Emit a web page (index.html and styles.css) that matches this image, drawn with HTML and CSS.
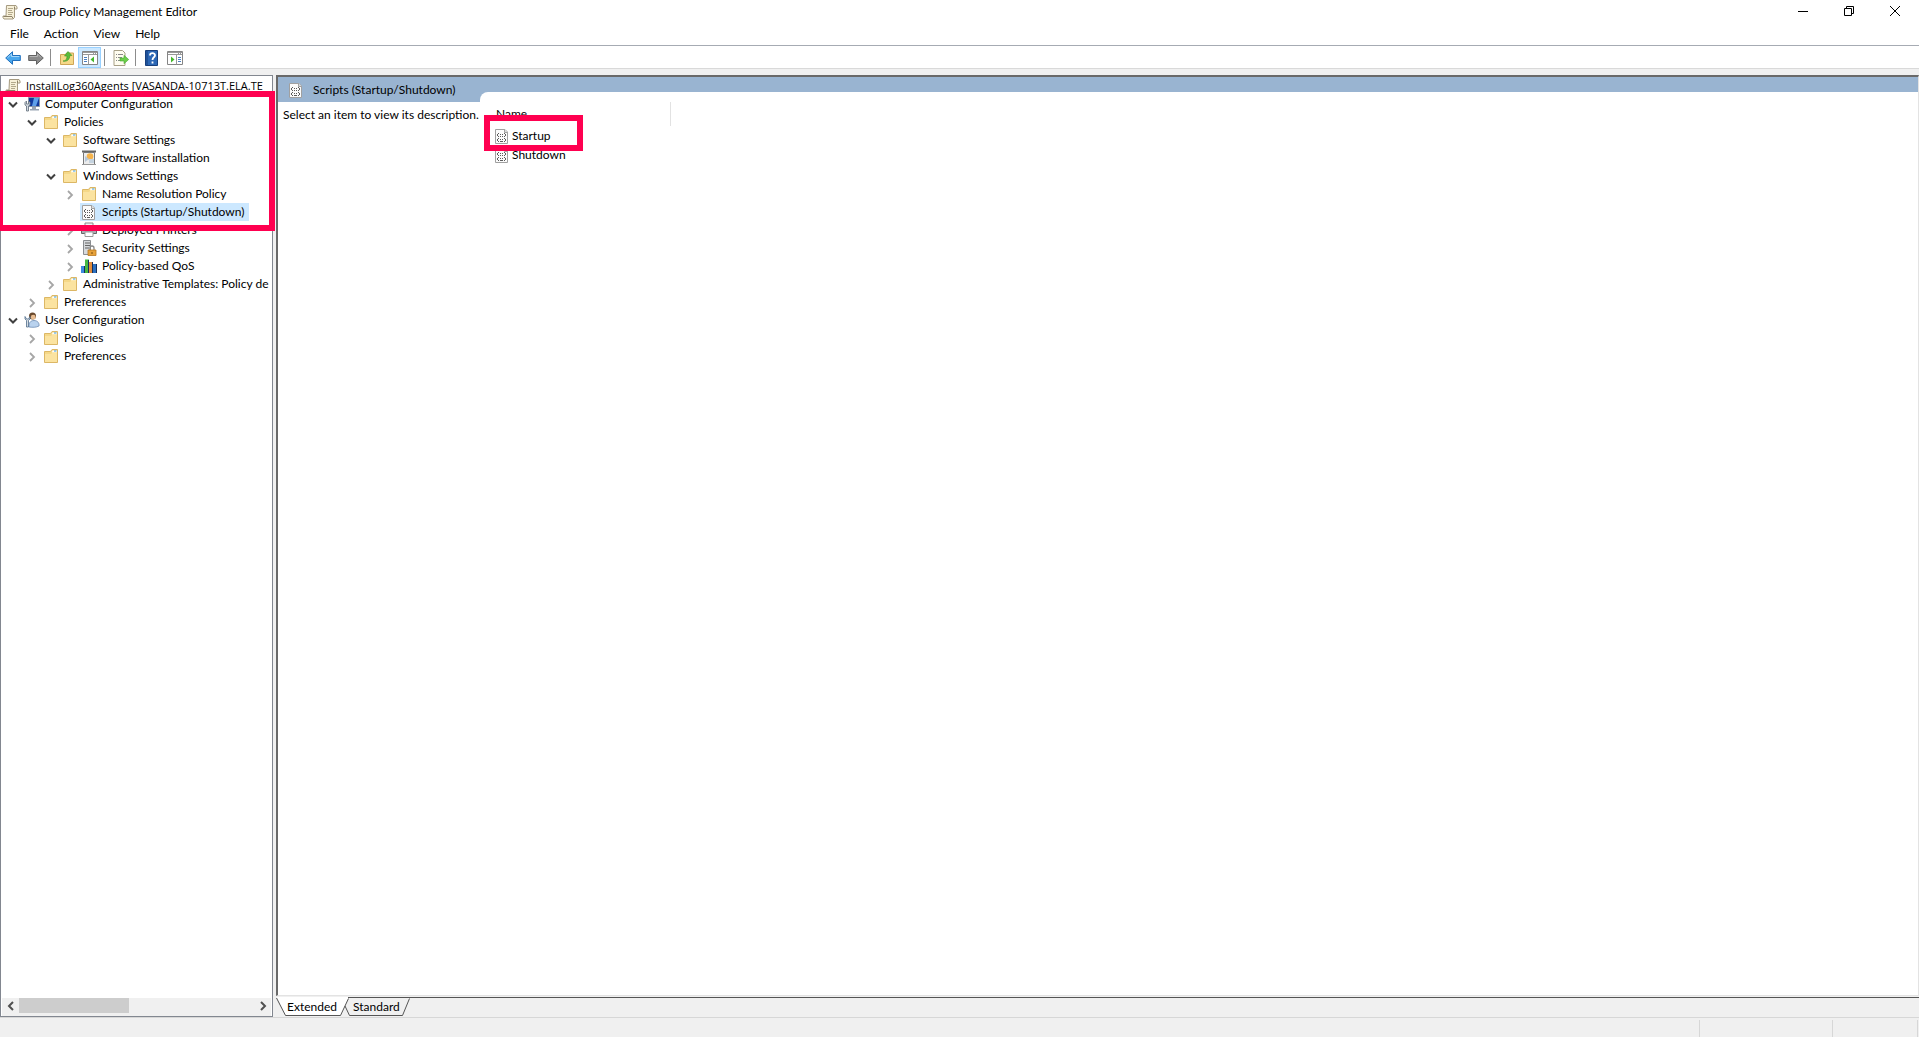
FILE: index.html
```html
<!DOCTYPE html>
<html lang="en">
<head>
<meta charset="utf-8">
<title>Group Policy Management Editor</title>
<link rel="stylesheet" href="styles.css">
</head>
<body>
<svg class="sprite" aria-hidden="true">
  <symbol id="folder" viewBox="0 0 16 16">
    <path d="M1.500 3.500h6l1.500-2h5.500v13h-13z" fill="#f5d888" stroke="#dcb765"/>
    <path d="M9.500 2.500h4.500v2H9z" fill="#fff"/><path d="M11 2.500h2.500v1H11z" fill="#3d9be0"/>
    <path d="M2 6h6l1.500-1.500H14V14H2z" fill="#fbe3a0"/>
  </symbol>
  <symbol id="scroll" viewBox="0 0 16 16">
    <path d="M4.500 1.500h9.500l1 1.500v2h-2.500v8.500l-1.500 1.500H2l-1-1.500V12h3z" fill="#f7f0d8" stroke="#a59a80"/>
    <path d="M12.500 5V2.500M1.500 12.500H10l1 2" fill="none" stroke="#8d8268"/>
    <path d="M6 4.500h5M6 6.500h4M6 8.500h5M6 10.500h4" stroke="#b3a98b"/>
  </symbol>
  <symbol id="script" viewBox="0 0 16 16">
    <path d="M1.500 1.500h9.500l2.500 2.500v11.500h-12z" fill="#fbfbfb" stroke="#a0a0a0"/>
    <path d="M10.500 1.500V4.500h3" fill="#ddd" stroke="#a0a0a0"/>
    <path d="M4 5h1v1H4zM3 6h1v2H3zM4 8h1v1H4zM6 6h1v1H6zM8 6h1v1H8zM10 5h1v1h-1zM11 6h1v2h-1zM10 8h1v1h-1zM6 8h1v1H6zM8 8h1v1H8zM4 10h1v1H4zM3 11h1v2H3zM4 13h1v1H4zM6 11h1v1H6zM8 11h1v1H8zM10 10h1v1h-1zM11 11h1v2h-1zM10 13h1v1h-1zM6 13h3v1H6z" fill="#5c5c5c"/>
  </symbol>
  <symbol id="computer" viewBox="0 0 16 16">
    <path d="M4.500 1.500h11v9h-11z" fill="#12399c" stroke="#8996a8"/>
    <path d="M10 2h5L12 10H8z" fill="#5fa0ea"/><path d="M8 11h4v2H8zM6 13h9v1.500H6z" fill="#9aa5b3"/>
    <path d="M1 6.500l1.500-1.500v3h2V5L6 6.500V9L4.500 10v5h-2v-5L1 9z" fill="#d4dbe2" stroke="#6c7884" stroke-width=".9"/>
  </symbol>
  <symbol id="installer" viewBox="0 0 16 16">
    <path d="M1 1.500h14" stroke="#666" stroke-width="2"/><path d="M2.500 2.500h11v12h-11z" fill="#ececec" stroke="#777"/>
    <circle cx="9" cy="6.500" r="3.300" fill="#f6b44c"/><path d="M4 6l4 3-4 3z" fill="#b6c6d6"/><path d="M8 9h5v4H8z" fill="#c5d3df"/><path d="M1 14.500h14" stroke="#999"/>
  </symbol>
  <symbol id="printer" viewBox="0 0 16 16">
    <path d="M4 1h8v5H4z" fill="#eef3f8" stroke="#888"/><path d="M.5 5.500h15v6H.5z" fill="#a9aeb4" stroke="#666"/>
    <path d="M1 8.500h14" stroke="#333"/><path d="M4 10h8v4.500H4z" fill="#fff" stroke="#999"/><path d="M12 7h2v1h-2z" fill="#62c14b"/>
  </symbol>
  <symbol id="security" viewBox="0 0 16 16">
    <path d="M2.500.500h7v14h-7z" fill="#d6d9dc" stroke="#8a8d91"/><path d="M4 3h5M4 5.500h5M4 8h4" stroke="#666"/>
    <path d="M9 10V8a2 2 0 014 0v2" fill="none" stroke="#888" stroke-width="1.300"/><path d="M7 10h8v5.500H7z" fill="#e7a23a" stroke="#b87720" stroke-width=".8"/><path d="M11 12v2" stroke="#7b4c10"/>
  </symbol>
  <symbol id="qos" viewBox="0 0 16 16">
    <path d="M0 8h4v7H0z" fill="#3f8ae0"/><path d="M4 1.500h4V15H4z" fill="#45b843"/><path d="M8 4h4v11H8z" fill="#e18c3b"/><path d="M12 6h4v9h-4z" fill="#2b70bf"/>
    <path d="M3.500 8v7M7.500 2v13M11.500 4v11M15.500 6v9" stroke="#14305e"/>
  </symbol>
  <symbol id="user" viewBox="0 0 16 16">
    <circle cx="8.500" cy="4" r="3.500" fill="#6b4a2d"/><circle cx="9.200" cy="5.200" r="2.400" fill="#e9bd91"/>
    <path d="M5 15c-.5-4 1.500-6.500 5-6.500s5.500 2.500 5 5.500c-3 1.500-6 1.500-10 1z" fill="#b9d2ee" stroke="#6d8cb3" stroke-width=".8"/>
    <path d="M1 4.500v2.500l1.500 1.500V15h2V8.500L6 7V4.500L4.500 7h-2z" fill="#d4dbe2" stroke="#4f6c8c" stroke-width=".8"/>
  </symbol>
  <symbol id="open" viewBox="0 0 16 16"><path d="M4 6.500l4 4 4-4" fill="none" stroke="#404040" stroke-width="2"/></symbol>
  <symbol id="closed" viewBox="0 0 16 16"><path d="M6 5l4 4-4 4" fill="none" stroke="#a6a6a6" stroke-width="1.800"/></symbol>
</svg>

<div class="app">
  <header class="titlebar">
    <svg class="icon"><use href="#scroll"/></svg>
    <h1 class="title">Group Policy Management Editor</h1>
    <div class="window-controls">
      <button class="window-button" aria-label="Minimize"><svg class="glyph" viewBox="0 0 12 12"><path d="M1 6.500h10" stroke="#000"/></svg></button>
      <button class="window-button" aria-label="Restore"><svg class="glyph" viewBox="0 0 12 12"><path d="M1.500 3.500h7v7h-7zM3.500 3.500v-2h7v7h-2" fill="none" stroke="#000"/></svg></button>
      <button class="window-button" aria-label="Close"><svg class="glyph" viewBox="0 0 12 12"><path d="M1 1l10 10M11 1L1 11" stroke="#000"/></svg></button>
    </div>
  </header>

  <nav class="menubar">
    <button class="menu">File</button>
    <button class="menu">Action</button>
    <button class="menu">View</button>
    <button class="menu">Help</button>
  </nav>

  <div class="toolbar" role="toolbar">
    <button class="tool" aria-label="Back"><svg class="icon" viewBox="0 0 16 16"><path d="M.7 8L7.500 1.700V5.500h7.800v5H7.500v3.800z" fill="#4aa7ec" stroke="#1f6fbd"/><path d="M2.500 7.700L6.500 4v2.500h7.800" fill="none" stroke="#a5d8fa"/></svg></button>
    <button class="tool" aria-label="Forward"><svg class="icon" viewBox="0 0 16 16"><path d="M15.300 8L8.500 1.700V5.500H.7v5h7.800v3.800z" fill="#8b8b8b" stroke="#616161"/><path d="M1.700 6.500h7.800V4l3.500 3.500" fill="none" stroke="#b5b5b5"/></svg></button>
    <span class="divider"></span>
    <button class="tool" aria-label="Up one level"><svg class="icon" viewBox="0 0 16 16"><path d="M1.500 4.500h5l1-1.500h7v11.500h-13z" fill="#f5d888" stroke="#cfa556"/><path d="M4 11c3 0 4-2 4-5H5.500L9 1.500 13 5.500h-2.200c0 4-2.800 6.500-6.800 5.500z" fill="#58bd3a" stroke="#3a9427" stroke-width=".6"/></svg></button>
    <button class="tool tool-on" aria-label="Show or hide console tree" aria-pressed="true"><svg class="icon" viewBox="0 0 16 16"><path d="M.5 1.500h15v13H.5z" fill="#fff" stroke="#858585"/><path d="M1 2h14v3H1z" fill="#999"/><path d="M1 3.500h10M12 3.500h1M14 3.500h1" stroke="#fff"/><path d="M6.500 5v9.500" stroke="#999"/><path d="M2 7.500h3M2 9.500h3M2 11.500h3" stroke="#4b7fc0"/><path d="M12 6.500v6L8.500 9.500z" fill="#45b82c"/></svg></button>
    <span class="divider"></span>
    <button class="tool" aria-label="Export list"><svg class="icon" viewBox="0 0 16 16"><path d="M1 .500h8.500L12 3v12.500H1z" fill="#fffdf0" stroke="#a79f86"/><path d="M3 4.500h1M5 4.500h5M3 7.500h1M5 7.500h4M3 10.500h1M5 10.500h4" stroke="#8a8a8a"/><path d="M7 8h4V5.300l4.700 4.200-4.700 4.200V11H7z" fill="#6cce4b" stroke="#48a930" stroke-width=".6"/></svg></button>
    <span class="divider"></span>
    <button class="tool" aria-label="Help"><svg class="icon" viewBox="0 0 16 16"><path d="M1.500.500h12v15h-12z" fill="#2c67b5" stroke="#173f7c"/><path d="M3 1v14" stroke="#123c7d"/><path d="M6 5.500c0-3 5-3 5-.2C11 7.500 8.500 7 8.500 10M8.500 11.500v2" fill="none" stroke="#fff" stroke-width="1.800"/></svg></button>
    <button class="tool" aria-label="Show or hide action pane"><svg class="icon" viewBox="0 0 16 16"><path d="M.5 1.500h15v13H.5z" fill="#fff" stroke="#858585"/><path d="M1 2h14v3H1z" fill="#999"/><path d="M1 3.500h10M12 3.500h1M14 3.500h1" stroke="#fff"/><path d="M9.500 5v9.500" stroke="#999"/><path d="M11 7.500h3M11 9.500h3M11 11.500h3" stroke="#4b7fc0"/><path d="M4 6.500v6L7.500 9.500z" fill="#45b82c"/></svg></button>
  </div>

  <main class="workspace">
    <aside class="tree-pane">
      <ul class="tree">
        <li class="node root"><svg class="icon"><use href="#scroll"/></svg><span class="label">InstallLog360Agents [VASANDA-10713T.ELA.TE</span></li>
        <li class="node"><svg class="icon"><use href="#open"/></svg><svg class="icon"><use href="#computer"/></svg><span class="label">Computer Configuration</span></li>
        <li class="node level-1"><svg class="icon"><use href="#open"/></svg><svg class="icon"><use href="#folder"/></svg><span class="label">Policies</span></li>
        <li class="node level-2"><svg class="icon"><use href="#open"/></svg><svg class="icon"><use href="#folder"/></svg><span class="label">Software Settings</span></li>
        <li class="node level-3"><svg class="icon"></svg><svg class="icon"><use href="#installer"/></svg><span class="label">Software installation</span></li>
        <li class="node level-2"><svg class="icon"><use href="#open"/></svg><svg class="icon"><use href="#folder"/></svg><span class="label">Windows Settings</span></li>
        <li class="node level-3"><svg class="icon"><use href="#closed"/></svg><svg class="icon"><use href="#folder"/></svg><span class="label">Name Resolution Policy</span></li>
        <li class="node level-3"><svg class="icon"></svg><span class="selected"><svg class="icon"><use href="#script"/></svg><span class="label">Scripts (Startup/Shutdown)</span></span></li>
        <li class="node level-3"><svg class="icon"><use href="#closed"/></svg><svg class="icon"><use href="#printer"/></svg><span class="label">Deployed Printers</span></li>
        <li class="node level-3"><svg class="icon"><use href="#closed"/></svg><svg class="icon"><use href="#security"/></svg><span class="label">Security Settings</span></li>
        <li class="node level-3"><svg class="icon"><use href="#closed"/></svg><svg class="icon"><use href="#qos"/></svg><span class="label">Policy-based QoS</span></li>
        <li class="node level-2"><svg class="icon"><use href="#closed"/></svg><svg class="icon"><use href="#folder"/></svg><span class="label">Administrative Templates: Policy de</span></li>
        <li class="node level-1"><svg class="icon"><use href="#closed"/></svg><svg class="icon"><use href="#folder"/></svg><span class="label">Preferences</span></li>
        <li class="node"><svg class="icon"><use href="#open"/></svg><svg class="icon"><use href="#user"/></svg><span class="label">User Configuration</span></li>
        <li class="node level-1"><svg class="icon"><use href="#closed"/></svg><svg class="icon"><use href="#folder"/></svg><span class="label">Policies</span></li>
        <li class="node level-1"><svg class="icon"><use href="#closed"/></svg><svg class="icon"><use href="#folder"/></svg><span class="label">Preferences</span></li>
      </ul>
      <div class="scrollbar">
        <button class="scroll-button" aria-label="Scroll left"><svg class="glyph" viewBox="0 0 12 12"><path d="M8 2L4 6l4 4" fill="none" stroke="#505050" stroke-width="2"/></svg></button>
        <div class="track"><div class="thumb"></div></div>
        <button class="scroll-button" aria-label="Scroll right"><svg class="glyph" viewBox="0 0 12 12"><path d="M4 2l4 4-4 4" fill="none" stroke="#505050" stroke-width="2"/></svg></button>
      </div>
      <div class="marker marker-tree"></div>
    </aside>

    <section class="result-pane">
      <div class="result-body">
        <div class="detail">
          <h2 class="detail-title"><svg class="icon"><use href="#script"/></svg>Scripts (Startup/Shutdown)</h2>
          <p class="description">Select an item to view its description.</p>
        </div>
        <div class="list">
          <table class="items">
            <thead><tr><th>Name</th></tr></thead>
            <tbody>
              <tr><td><div class="item"><svg class="icon"><use href="#script"/></svg>Startup</div></td></tr>
              <tr><td><div class="item"><svg class="icon"><use href="#script"/></svg>Shutdown</div></td></tr>
            </tbody>
          </table>
          <div class="marker marker-item"></div>
        </div>
      </div>
      <div class="tabs">
        <svg class="tab-shape" viewBox="0 0 140 20">
          <path d="M1 0l9 18.500h54.500L72.500 0z" fill="#fff"/>
          <path d="M.5 1l9 17.500h55L72.500 1.500M69 9l4.500 9.500h53l7-17" fill="none" stroke="#555"/>
        </svg>
        <button class="tab">Extended</button>
        <button class="tab">Standard</button>
        <span class="tab-rule"></span>
      </div>
    </section>
  </main>

  <footer class="statusbar">
    <span class="status-main"></span><span class="status-cell"></span><span class="status-cell status-last"></span>
  </footer>
</div>
</body>
</html>
```
FILE: styles.css
```css
* { box-sizing: border-box; }

body {
  margin: 0;
  background: #fff;
  color: #000;
  font: 12px/18px Lato, "Open Sans", sans-serif;
}

button {
  margin: 0;
  padding: 0;
  border: 0;
  background: none;
  color: inherit;
  font: inherit;
}

h1, h2, p, ul { margin: 0; padding: 0; font: inherit; }

.sprite { position: absolute; width: 0; height: 0; }
.icon { width: 16px; height: 16px; flex: none; display: block; }
.glyph { width: 12px; height: 12px; display: block; }

.app { display: flex; flex-direction: column; height: 100vh; }

/* Title bar, menus and tools */
.titlebar { display: flex; align-items: center; height: 24px; padding-left: 2px; }
.title { margin-left: 5px; }
.window-controls { display: flex; align-self: flex-start; margin-left: auto; padding-right: 1px; }
.window-button { width: 46px; height: 21px; display: grid; place-items: center; }

.menubar { display: flex; gap: 15px; height: 22px; padding: 1px 10px 2px; border-bottom: 1px solid #a6abb3; }
.toolbar { display: flex; align-items: center; height: 23px; padding: 1px 1px 0; border-bottom: 1px solid #d9d9d9; }
.tool { width: 23px; height: 21px; display: grid; place-items: center; }
.tool-on { background: #cce8ff; border: 1px solid #99d1ff; }
.divider { width: 1px; height: 17px; margin: 0 4px 0 3px; background: #8c8c8c; }

/* Console tree */
.workspace { flex: 1; min-height: 0; display: flex; gap: 3px; padding-top: 6px; background: #f0f0f0; }
.tree-pane { position: relative; width: 273px; flex: none; display: flex; flex-direction: column; border: 1px solid #828790; background: #fff; }
.tree { flex: 1; min-height: 0; overflow: hidden; padding-top: 1px; list-style: none; }
.node { display: flex; align-items: center; gap: 3px; height: 18px; padding-left: 4px; white-space: nowrap; }
.root { font: 11px/18px "Open Sans", sans-serif; }
.level-1 { padding-left: 23px; }
.level-2 { padding-left: 42px; }
.level-3 { padding-left: 61px; }
.label { margin-left: 2px; }
.selected { display: flex; align-items: center; gap: 3px; height: 18px; margin-left: -1px; padding: 0 5px 0 1px; background: #cce8ff; }

.scrollbar { display: flex; height: 18px; margin: 0 1px; padding-bottom: 3px; background: #f0f0f0; }
.scroll-button { width: 17px; display: grid; place-items: center; }
.track { flex: 1; }
.thumb { width: 47%; height: 15px; background: #cdcdcd; }

/* Result pane */
.result-pane { flex: 1; min-width: 0; display: flex; flex-direction: column; }
.result-body {
  flex: 1;
  display: flex;
  border: solid;
  border-width: 2px 1px 1px 2px;
  border-color: #696969 #e3e3e3 #e3e3e3 #696969;
  background: linear-gradient(#99b4d1 25px, #fff 25px);
}
.detail { width: 202px; flex: none; }
.detail-title { display: flex; align-items: center; gap: 9px; height: 25px; padding-left: 10px; }
.description { padding: 4px 5px; white-space: nowrap; }
.list { position: relative; flex: 1; margin-top: 15px; padding-top: 10px; border-top-left-radius: 8px; background: #fff; }
.items { border-collapse: collapse; }
.items th { width: 190px; height: 24px; padding: 0 16px; border-right: 1px solid #e2e2e2; font-weight: normal; text-align: left; }
.items td { height: 19px; padding: 0 14px; }
.item { display: flex; align-items: center; gap: 2px; }
.items tbody { line-height: 19px; }

.tabs { position: relative; display: flex; height: 21px; padding: 3px 0 0 11px; gap: 16px; }
.tab-shape { position: absolute; left: 0; top: 1px; width: 140px; height: 20px; }
.tab { position: relative; height: 16px; line-height: 16px; }
.tab-rule { position: absolute; left: 72px; right: 0; top: 1px; height: 1px; background: #555; }

/* Red frames that point out the items to open */
.marker { position: absolute; border: 6px solid #ff0050; pointer-events: none; }
.marker-tree { left: -4px; right: -3px; top: 15px; height: 140px; }
.marker-item { left: 4px; top: 23px; width: 99px; height: 36px; }

.statusbar { display: flex; height: 20px; padding: 2px 1px 0 0; border-top: 1px solid #d7d7d7; background: #f0f0f0; }
.status-main { flex: 1; border-right: 1px solid #d7d7d7; }
.status-cell { width: 133px; border-right: 1px solid #d7d7d7; }
.status-last { width: 85px; }
```
